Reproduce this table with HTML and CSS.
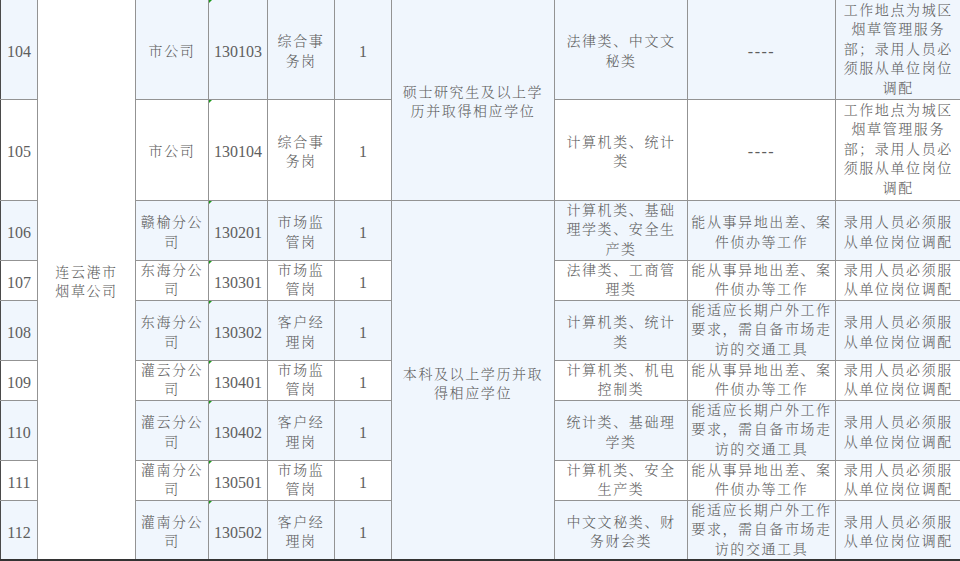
FILE: index.html
```html
<!DOCTYPE html>
<html lang="zh-CN">
<head>
<meta charset="utf-8">
<title>招聘岗位表</title>
<link rel="stylesheet" href="styles.css">
</head>
<body>
<table class="jobs">
  <colgroup>
    <col class="c-no"><col class="c-unit"><col class="c-dept"><col class="c-code"><col class="c-post"><col class="c-num"><col class="c-edu"><col class="c-major"><col class="c-req"><col class="c-note">
  </colgroup>
  <tbody>
    <tr class="r-tall alt">
      <td class="num">104</td>
      <td class="unit" rowspan="9">连云港市<br>烟草公司</td>
      <td>市公司</td>
      <td class="num code">130103</td>
      <td>综合事<br>务岗</td>
      <td class="num">1</td>
      <td class="edu" rowspan="2">硕士研究生及以上学<br>历并取得相应学位</td>
      <td>法律类、中文文<br>秘类</td>
      <td class="dash">----</td>
      <td class="note">工作地点为城区<br>烟草管理服务<br>部；录用人员必<br>须服从单位岗位<br>调配</td>
    </tr>
    <tr class="r-tall2">
      <td class="num">105</td>
      <td>市公司</td>
      <td class="num code">130104</td>
      <td>综合事<br>务岗</td>
      <td class="num">1</td>
      <td>计算机类、统计<br>类</td>
      <td class="dash">----</td>
      <td class="note">工作地点为城区<br>烟草管理服务<br>部；录用人员必<br>须服从单位岗位<br>调配</td>
    </tr>
    <tr class="r-mid alt">
      <td class="num">106</td>
      <td>赣榆分公<br>司</td>
      <td class="num code">130201</td>
      <td>市场监<br>管岗</td>
      <td class="num">1</td>
      <td class="edu edu-last" rowspan="7">本科及以上学历并取<br>得相应学位</td>
      <td class="tri">计算机类、基础<br>理学类、安全生<br>产类</td>
      <td>能从事异地出差、案<br>件侦办等工作</td>
      <td>录用人员必须服<br>从单位岗位调配</td>
    </tr>
    <tr class="r-low">
      <td class="num">107</td>
      <td>东海分公<br>司</td>
      <td class="num code">130301</td>
      <td>市场监<br>管岗</td>
      <td class="num">1</td>
      <td>法律类、工商管<br>理类</td>
      <td>能从事异地出差、案<br>件侦办等工作</td>
      <td>录用人员必须服<br>从单位岗位调配</td>
    </tr>
    <tr class="r-mid alt">
      <td class="num">108</td>
      <td>东海分公<br>司</td>
      <td class="num code">130302</td>
      <td>客户经<br>理岗</td>
      <td class="num">1</td>
      <td>计算机类、统计<br>类</td>
      <td class="tri">能适应长期户外工作<br>要求，需自备市场走<br>访的交通工具</td>
      <td>录用人员必须服<br>从单位岗位调配</td>
    </tr>
    <tr class="r-low">
      <td class="num">109</td>
      <td>灌云分公<br>司</td>
      <td class="num code">130401</td>
      <td>市场监<br>管岗</td>
      <td class="num">1</td>
      <td>计算机类、机电<br>控制类</td>
      <td>能从事异地出差、案<br>件侦办等工作</td>
      <td>录用人员必须服<br>从单位岗位调配</td>
    </tr>
    <tr class="r-mid alt">
      <td class="num">110</td>
      <td>灌云分公<br>司</td>
      <td class="num code">130402</td>
      <td>客户经<br>理岗</td>
      <td class="num">1</td>
      <td>统计类、基础理<br>学类</td>
      <td class="tri">能适应长期户外工作<br>要求，需自备市场走<br>访的交通工具</td>
      <td>录用人员必须服<br>从单位岗位调配</td>
    </tr>
    <tr class="r-low">
      <td class="num">111</td>
      <td>灌南分公<br>司</td>
      <td class="num code">130501</td>
      <td>市场监<br>管岗</td>
      <td class="num">1</td>
      <td>计算机类、安全<br>生产类</td>
      <td>能从事异地出差、案<br>件侦办等工作</td>
      <td>录用人员必须服<br>从单位岗位调配</td>
    </tr>
    <tr class="r-mid alt last">
      <td class="num">112</td>
      <td>灌南分公<br>司</td>
      <td class="num code">130502</td>
      <td>客户经<br>理岗</td>
      <td class="num">1</td>
      <td>中文文秘类、财<br>务财会类</td>
      <td class="tri">能适应长期户外工作<br>要求，需自备市场走<br>访的交通工具</td>
      <td>录用人员必须服<br>从单位岗位调配</td>
    </tr>
  </tbody>
</table>
</body>
</html>
```

FILE: styles.css
```css
html, body {
  margin: 0;
  padding: 0;
  background: #ffffff;
}

.jobs {
  border-collapse: collapse;
  table-layout: fixed;
  width: 960px;
  font-family: "Liberation Serif", "Noto Serif CJK SC", "Noto Sans CJK SC", serif;
  font-size: 14px;
  line-height: 19.5px;
  letter-spacing: 1.6px;
  color: #5e5e5e;
  font-weight: 300;
}

.c-no { width: 37px; }
.c-unit { width: 98px; }
.c-dept { width: 73px; }
.c-code { width: 59px; }
.c-post { width: 67px; }
.c-num { width: 57px; }
.c-edu { width: 163px; }
.c-major { width: 133px; }
.c-req { width: 148px; }
.c-note { width: 125px; }

.jobs td {
  border: 1px solid #939393;
  padding: 5px 0 0;
  text-align: center;
  vertical-align: middle;
  white-space: nowrap;
  overflow: hidden;
  box-sizing: border-box;
}

.jobs .r-low td,
.jobs td.tri,
.jobs td.note {
  padding-top: 0;
}

.jobs .r-low td.num {
  padding-top: 5px;
}

.jobs td.edu-last {
  padding-top: 9px;
}

.jobs tr td:first-child {
  border-left: 1px solid #4a4a4a;
}

.jobs tr:first-child td {
  border-top: none;
}

.jobs tr.last td,
.jobs td.unit,
.jobs td.edu-last {
  border-bottom: 2px solid #333333;
}

.jobs td:last-child {
  border-right: none;
}

.r-tall { height: 99px; }
.r-tall2 { height: 101px; }
.r-mid { height: 60px; }
.r-low { height: 40px; }

.alt td {
  background: #f0f6fd;
}

.jobs td.unit {
  background: #ffffff;
}

.jobs td.edu {
  background: #f0f6fd;
}

.num {
  font-size: 16px;
  letter-spacing: 0;
  font-weight: 400;
}

.code {
  position: relative;
}

.code::before {
  content: "";
  position: absolute;
  left: 0;
  top: 0;
  width: 0;
  height: 0;
  border-top: 3px solid #1a9a1a;
  border-right: 3px solid transparent;
}

.dash {
  letter-spacing: 1.5px;
  font-size: 16px;
  font-weight: 400;
}
```
